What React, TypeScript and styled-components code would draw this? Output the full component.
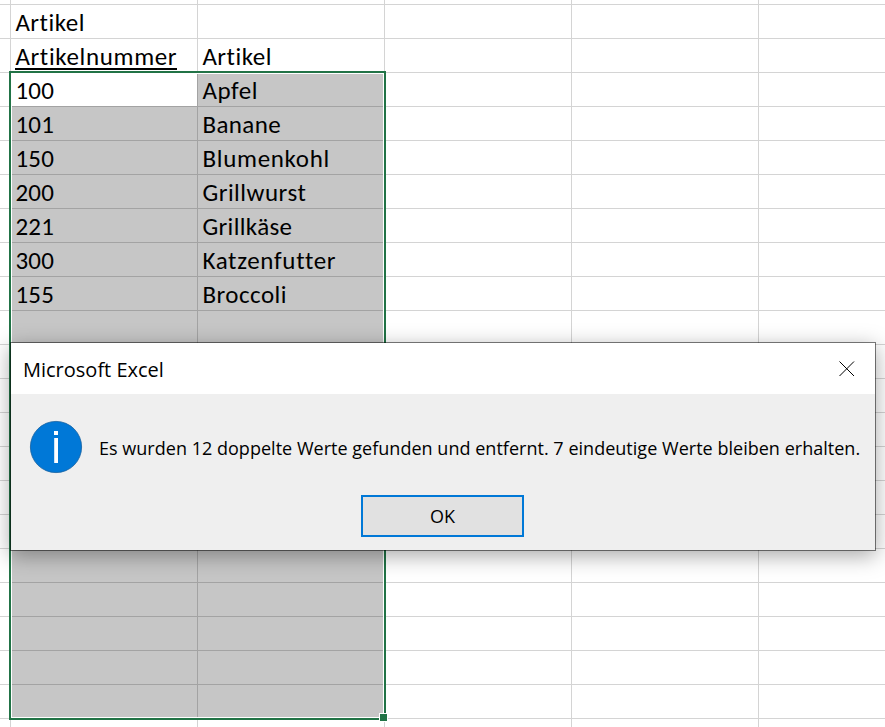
import React from "react";
import styled, { createGlobalStyle } from "styled-components";

const GlobalStyle = createGlobalStyle`
  html, body { margin: 0; padding: 0; background: #fff; overflow: hidden; }
  * { box-sizing: border-box; }
`;

const Window = styled.main`
  position: relative;
  width: 885px;
  height: 727px;
  overflow: hidden;
  background: #fff;
  color: #000;
`;

const Sheet = styled.div`
  display: grid;
  width: 946px;
  grid-template-columns: 11px repeat(5, 187px);
  grid-template-rows: 5px;
  grid-auto-rows: 34px;
`;

const Cell = styled.div<{ $selected: boolean; $active: boolean }>`
  padding-left: 4.4px;
  border-right: 1px solid ${(p) => (p.$selected ? "#a3a3a3" : "#d4d4d4")};
  border-bottom: 1px solid ${(p) => (p.$selected ? "#a3a3a3" : "#d4d4d4")};
  background: ${(p) => (p.$selected && !p.$active ? "#c6c6c6" : "#fff")};
  font: 25px/35px Calibri, Carlito, Lato, sans-serif;
  white-space: nowrap;
`;

const CellText = styled.span<{ $spacing: number; $underlined: boolean }>`
  display: inline-block;
  height: 31px;
  letter-spacing: ${(p) => p.$spacing}px;
  border-bottom: ${(p) => (p.$underlined ? "2px solid #000" : "none")};
`;

const Selection = styled.div`
  position: absolute;
  left: 9px;
  top: 71px;
  width: 377px;
  height: 649px;
  border: 2px solid #217346;
  box-shadow: inset 0 0 0 1px #fff;
`;

const FillHandle = styled.div`
  position: absolute;
  right: -4px;
  bottom: -4px;
  width: 9px;
  height: 9px;
  border: 1px solid #fff;
  background: #217346;
`;

const Dialog = styled.section`
  position: absolute;
  left: 10px;
  top: 342px;
  width: 866px;
  height: 209px;
  display: flex;
  flex-direction: column;
  border: 1px solid rgba(0, 0, 0, 0.5);
  background: #efefef;
  background-clip: padding-box;
  box-shadow: 0 5px 20px rgba(0, 0, 0, 0.34);
`;

const TitleBar = styled.header`
  display: flex;
  justify-content: space-between;
  height: 51px;
  padding: 0 20px 0 12px;
  background: #fff;
`;

const Title = styled.h1`
  margin: 0;
  font: 400 20px/53px "Open Sans", "Noto Sans", sans-serif;
`;

const CloseButton = styled.button`
  display: flex;
  width: 16px;
  height: 16px;
  margin-top: 18px;
  padding: 0;
  border: 0;
  background: none;
`;

const MessageRow = styled.div`
  display: flex;
  height: 101px;
  padding: 26px 0 0 18px;
  gap: 16px;
`;

const Message = styled.p`
  margin: 0;
  font: 400 18px/56px "Open Sans", "Noto Sans", sans-serif;
  letter-spacing: 0.022px;
  white-space: nowrap;
`;

const OkButton = styled.button`
  width: 163px;
  height: 42px;
  margin-left: 350px;
  padding: 0;
  border: 2px solid #0078d7;
  background: #e1e1e1;
  color: #000;
  font: 400 18px/38px "Open Sans", "Noto Sans", sans-serif;
`;

const articles = [
  { number: "100", name: "Apfel" },
  { number: "101", name: "Banane" },
  { number: "150", name: "Blumenkohl" },
  { number: "200", name: "Grillwurst" },
  { number: "221", name: "Grillkäse" },
  { number: "300", name: "Katzenfutter" },
  { number: "155", name: "Broccoli" },
];

const defaultSpacing = 0.65;
const spacing: Record<string, number> = {
  Artikel: 0.5,
  Banane: 0.4,
  Blumenkohl: 0.7,
  Grillwurst: 0.5,
  Grillkäse: 0.35,
  Katzenfutter: 0.7,
  Broccoli: 0.5,
};

const rows: string[][] = [
  [],
  ["Artikel"],
  ["Artikelnummer", "Artikel"],
  ...articles.map((a) => [a.number, a.name]),
  ...Array.from({ length: 13 }, () => [] as string[]),
];

const letterSpacing = (text: string) =>
  /^\d+$/.test(text) ? 0.3 : spacing[text] ?? defaultSpacing;

function InfoIcon() {
  return (
    <svg width="54" height="54" viewBox="0 0 54 54" aria-hidden="true">
      <circle cx="27" cy="27" r="25.6" fill="#0078d7" stroke="#14609f" strokeWidth="0.8" />
      <rect x="25" y="11" width="4" height="4" fill="#fff" />
      <rect x="25.2" y="18" width="3.8" height="25" fill="#fff" />
    </svg>
  );
}

export default function App() {
  return (
    <Window>
      <GlobalStyle />
      <Sheet>
        {rows.map((row, r) =>
          [0, 1, 2, 3, 4, 5].map((c) => {
            const text = row[c - 1];
            return (
              <Cell
                key={`${r}-${c}`}
                $selected={r >= 3 && r <= 21 && (c === 1 || c === 2)}
                $active={r === 3 && c === 1}
              >
                {text && (
                  <CellText $spacing={letterSpacing(text)} $underlined={text === "Artikelnummer"}>
                    {text}
                  </CellText>
                )}
              </Cell>
            );
          })
        )}
      </Sheet>
      <Selection>
        <FillHandle />
      </Selection>
      <Dialog role="dialog" aria-labelledby="dialog-title">
        <TitleBar>
          <Title id="dialog-title">Microsoft Excel</Title>
          <CloseButton aria-label="Schließen">
            <svg width="16" height="16" viewBox="0 0 16 16">
              <path d="M.5.5l14.5 14.5M15 .5L.5 15" stroke="#000" strokeWidth="1" />
            </svg>
          </CloseButton>
        </TitleBar>
        <MessageRow>
          <InfoIcon />
          <Message>Es wurden 12 doppelte Werte gefunden und entfernt. 7 eindeutige Werte bleiben erhalten.</Message>
        </MessageRow>
        <OkButton>OK</OkButton>
      </Dialog>
    </Window>
  );
}
